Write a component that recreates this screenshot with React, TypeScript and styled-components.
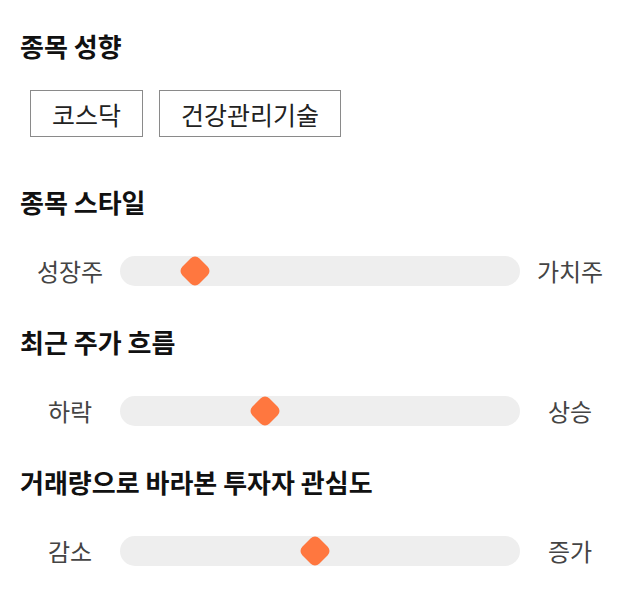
import React from "react";
import styled, { createGlobalStyle } from "styled-components";

const GlobalStyle = createGlobalStyle`
  html, body {
    margin: 0;
    padding: 0;
    background: #ffffff;
  }
  body {
    font-family: "Noto Sans CJK KR", "Noto Sans", sans-serif;
    color: #111111;
  }
`;

const Page = styled.div`
  width: 640px;
  padding: 31px 20px 0;
  box-sizing: border-box;
  display: flex;
  flex-direction: column;
`;

const Section = styled.section<{ $gapAfter: number }>`
  display: flex;
  flex-direction: column;
  margin-bottom: ${(p) => p.$gapAfter}px;
`;

const Heading = styled.h2`
  margin: 0;
  font-size: 26px;
  line-height: 30px;
  font-weight: 700;
  color: #111111;
  letter-spacing: 0;
`;

const ChipRow = styled.div`
  display: flex;
  gap: 16px;
  padding: 0 10px;
  margin-top: 29px;
`;

const Chip = styled.span`
  display: inline-flex;
  align-items: center;
  justify-content: center;
  height: 47px;
  box-sizing: border-box;
  padding: 0 21px;
  border: 1px solid #8a8a8a;
  font-size: 25px;
  color: #222222;
  background: #ffffff;
`;

const SliderRow = styled.div`
  display: flex;
  align-items: center;
  margin-top: 39px;
  height: 30px;
`;

const SideLabel = styled.span`
  width: 100px;
  flex: 0 0 100px;
  text-align: center;
  font-size: 24px;
  line-height: 30px;
  color: #444444;
`;

const Track = styled.div`
  position: relative;
  flex: 1;
  height: 30px;
  border-radius: 15px;
  background: #eeeeee;
`;

const Thumb = styled.div`
  position: absolute;
  top: 50%;
  width: 24px;
  height: 24px;
  border-radius: 6px;
  background: #ff773f;
  transform: translate(-50%, -50%) rotate(45deg);
`;

type SliderProps = { left: string; right: string; pos: number };

const Slider = ({ left, right, pos }: SliderProps) => (
  <SliderRow>
    <SideLabel>{left}</SideLabel>
    <Track>
      <Thumb style={{ left: `${pos}px` }} />
    </Track>
    <SideLabel>{right}</SideLabel>
  </SliderRow>
);

export default function App() {
  return (
    <>
      <GlobalStyle />
      <Page>
        <Section $gapAfter={50}>
          <Heading>종목 성향</Heading>
          <ChipRow>
            <Chip>코스닥</Chip>
            <Chip>건강관리기술</Chip>
          </ChipRow>
        </Section>
        <Section $gapAfter={41}>
          <Heading>종목 스타일</Heading>
          <Slider left="성장주" right="가치주" pos={75} />
        </Section>
        <Section $gapAfter={41}>
          <Heading>최근 주가 흐름</Heading>
          <Slider left="하락" right="상승" pos={145} />
        </Section>
        <Section $gapAfter={0}>
          <Heading>거래량으로 바라본 투자자 관심도</Heading>
          <Slider left="감소" right="증가" pos={195} />
        </Section>
      </Page>
    </>
  );
}
